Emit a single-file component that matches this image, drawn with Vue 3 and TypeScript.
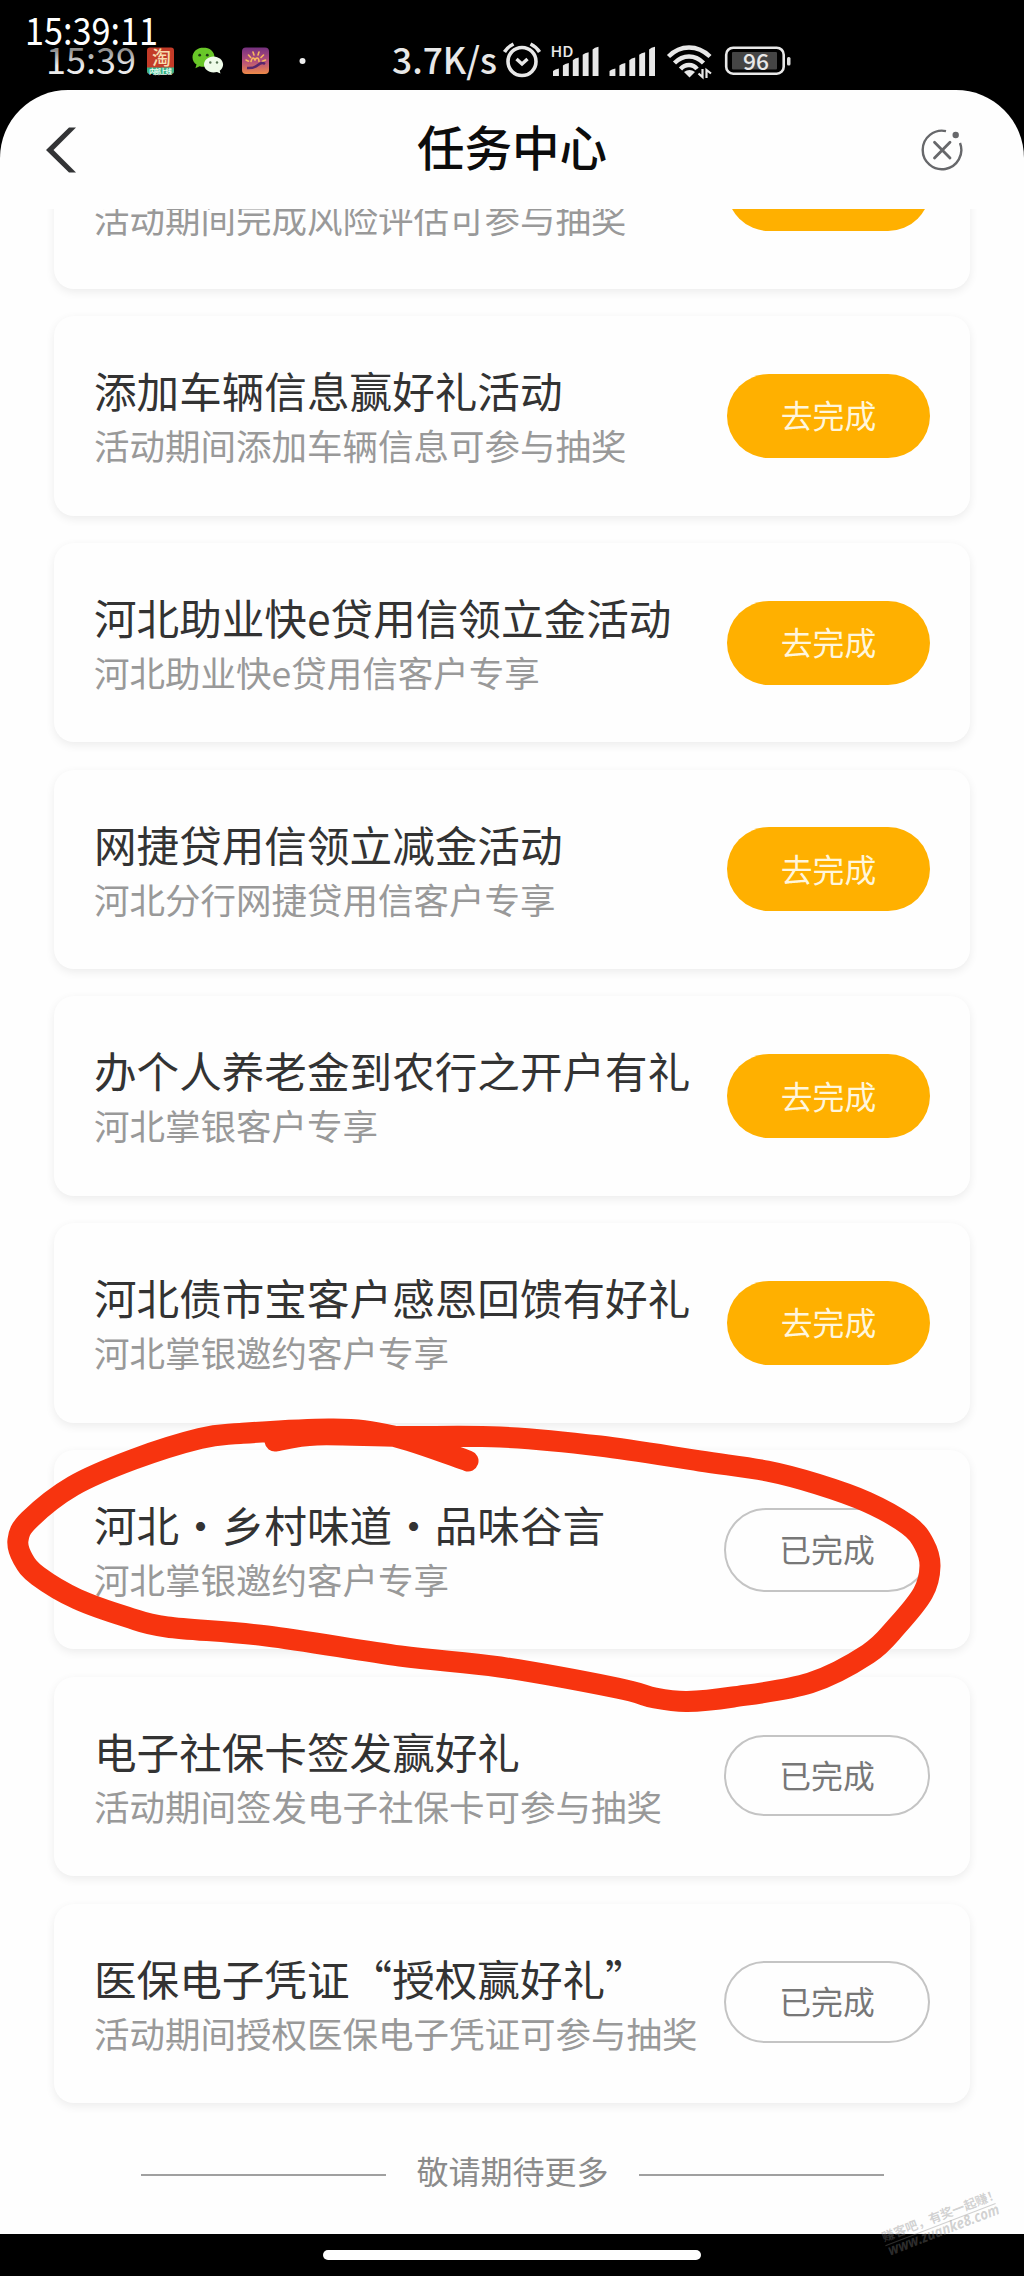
<script setup lang="ts">
interface Task {
  title?: string
  desc: string
  done?: boolean
  tall?: boolean
}

const tasks: Task[] = [
  { desc: '活动期间完成风险评估可参与抽奖' },
  { title: '添加车辆信息赢好礼活动', desc: '活动期间添加车辆信息可参与抽奖' },
  { title: '河北助业快e贷用信领立金活动', desc: '河北助业快e贷用信客户专享' },
  { title: '网捷贷用信领立减金活动', desc: '河北分行网捷贷用信客户专享' },
  { title: '办个人养老金到农行之开户有礼', desc: '河北掌银客户专享' },
  { title: '河北债市宝客户感恩回馈有好礼', desc: '河北掌银邀约客户专享' },
  { title: '河北・乡村味道・品味谷言', desc: '河北掌银邀约客户专享', done: true, tall: true },
  { title: '电子社保卡签发赢好礼', desc: '活动期间签发电子社保卡可参与抽奖', done: true },
  { title: '医保电子凭证“授权赢好礼”', desc: '活动期间授权医保电子凭证可参与抽奖', done: true },
]

type Point = [number, number]

// Hand-drawn marker stroke, clockwise from its first touch
const stroke: Point[] = [
  [275, 1441], [317, 1435], [400, 1436.5], [500, 1437], [600, 1446], [700, 1461], [767, 1471],
  [817, 1484], [867, 1502], [908, 1525], [924, 1544], [930, 1566], [923, 1593], [897, 1626],
  [868, 1654], [810, 1683], [733, 1697], [687, 1701.5], [655, 1698], [617, 1688], [500, 1667],
  [400, 1656], [267, 1636], [167, 1627], [127, 1617], [77, 1599], [38, 1576], [23, 1559],
  [18, 1540], [29, 1520], [73, 1486], [133, 1459.5], [200, 1438.5], [240, 1433.5], [333, 1429],
  [393, 1436], [468, 1461],
]

function smooth(p: Point[]): string {
  let d = `M${p[0][0]} ${p[0][1]}`
  for (let i = 0; i < p.length - 1; i++) {
    const a = p[Math.max(i - 1, 0)]
    const b = p[i]
    const c = p[i + 1]
    const e = p[Math.min(i + 2, p.length - 1)]
    d += `C${b[0] + (c[0] - a[0]) / 6} ${b[1] + (c[1] - a[1]) / 6} ${c[0] - (e[0] - b[0]) / 6} ${c[1] - (e[1] - b[1]) / 6} ${c[0]} ${c[1]}`
  }
  return d
}

const strokePath = smooth(stroke)
const bars = [0, 1, 2, 3, 4]
</script>

<template>
  <div class="phone">
    <div class="status">
      <svg class="status-left" viewBox="0 0 320 90" width="320" height="90">
        <defs>
          <linearGradient id="clock-fade" x1="0" y1="0" x2="0" y2="1">
            <stop offset=".35" stop-color="#909090" />
            <stop offset=".65" stop-color="#ececec" />
          </linearGradient>
          <linearGradient id="sunset-fade" x1="0" y1="0" x2="0" y2="1">
            <stop offset="0" stop-color="#75307f" />
            <stop offset=".55" stop-color="#b8527a" />
            <stop offset="1" stop-color="#ee8a48" />
          </linearGradient>
        </defs>
        <text x="46" y="74" font-size="36" fill="url(#clock-fade)" textLength="90" lengthAdjust="spacingAndGlyphs">15:39</text>
        <text x="25" y="45" font-size="38.500" fill="#fff" textLength="133" lengthAdjust="spacingAndGlyphs">15:39:11</text>
        <rect x="147" y="47.500" width="27" height="26.500" rx="3" fill="#c33b28" />
        <path d="M147 67.500h27V71a3 3 0 0 1-3 3h-21a3 3 0 0 1-3-3z" fill="#35b184" />
        <text x="152" y="65" font-size="19" fill="#f7dcae" font-weight="500">淘</text>
        <text x="149" y="73.500" font-size="6.500" fill="#e8fff4" font-weight="700" textLength="23">内部上线</text>
        <path d="M203.500 47.500c-6.100 0-11 4.300-11 9.700 0 3.100 1.600 5.600 4 7.400l-1.100 3.600 4.200-2c1.200.4 2.500.6 3.900.6 6.100 0 11-4.300 11-9.700s-4.900-9.600-11-9.600z" fill="#69c728" />
        <circle cx="199.700" cy="55.200" r="1.400" fill="#1d3a10" /><circle cx="207.300" cy="55.200" r="1.400" fill="#1d3a10" />
        <path d="M213.500 56.500c5.300 0 9.600 3.600 9.600 8.100 0 2.500-1.300 4.700-3.400 6.200l.8 2.700-3.500-1.500c-1.100.3-2.300.5-3.500.5-5.300 0-9.500-3.500-9.500-7.900s4.200-8.100 9.500-8.100z" fill="#eefbe9" />
        <circle cx="210.300" cy="62.500" r="1.200" fill="#557252" /><circle cx="217" cy="62.500" r="1.200" fill="#557252" />
        <rect x="242" y="47.500" width="27" height="26.500" rx="4" fill="url(#sunset-fade)" />
        <g fill="none" stroke="#f8b85e" stroke-width="1.600" stroke-linecap="round">
          <path d="M246 60l2.500 1.200M248.500 55l2.200 2.500M253 52l1 3M259 52l-1 3M263.500 55l-2.500 2.500M265.500 60l-3 1.200M251 61.500c1-4 3-5 4-1 1-4 4-3 4 1" />
        </g>
        <path d="M247 68q7 .5 11-3t7-1" fill="none" stroke="#57266d" stroke-width="2.400" />
        <circle cx="302.500" cy="61" r="3" fill="#eee" />
      </svg>
      <svg class="status-right" viewBox="385 0 410 90" width="410" height="90">
        <text x="392" y="74" font-size="36" fill="#e8e8e8" font-weight="500" textLength="105" lengthAdjust="spacingAndGlyphs">3.7K/s</text>
        <g fill="none" stroke="#e8e8e8">
          <circle cx="522" cy="61.500" r="14" stroke-width="3.600" />
          <path d="M516.500 59l5.500 5 5.500-5" stroke-width="3.400" />
          <path d="M504.500 52q3-5 9-8M539.500 52q-3-5-9-8" stroke-width="3.600" />
        </g>
        <text x="550.500" y="57" font-size="14.500" fill="#e8e8e8" font-weight="500" textLength="23" lengthAdjust="spacingAndGlyphs">HD</text>
        <g v-for="ox in [553, 609.500]" :key="ox" fill="#e8e8e8">
          <path v-for="b in bars" :key="b" :d="`M${ox + b * 9.9} 76v${-(5 + b * 5.4)}q2-2 5.900-2.600v${7.6 + b * 5.4}z`" />
        </g>
        <g fill="none" stroke="#e8e8e8" stroke-width="4.400">
          <path d="M668.500 56.500q9-9 20.500-9t21 9" />
          <path d="M674.500 63q6.500-6.500 14.500-6.500t14.500 6.500" />
          <path d="M680.500 69q3.500-4 8.500-4t8 4" />
        </g>
        <path d="M684 72q5.500-4 11 0l-5.500 5.500z" fill="#e8e8e8" />
        <path d="M702.500 69v8l-4-3.500M706.500 78v-8l4.500 3.500" fill="none" stroke="#e8e8e8" stroke-width="2.200" />
        <rect x="726.200" y="47.700" width="57.500" height="26" rx="7" fill="none" stroke="#e8e8e8" stroke-width="2.600" />
        <rect x="732" y="52" width="45" height="17.500" rx="1" fill="#454545" />
        <rect x="787" y="57" width="3.500" height="8.500" rx="1.500" fill="#ddd" />
        <text x="743" y="69.500" font-size="22.500" fill="#e8e8e8" font-weight="500" textLength="26" lengthAdjust="spacingAndGlyphs">96</text>
      </svg>
    </div>

    <div class="screen">
      <header class="header">
        <svg viewBox="0 0 32 48" width="32" height="48"><path d="M1 24 24 1.500h7L8.500 24 31 46.500h-7z" fill="#333436" /></svg>
        <h1>任务中心</h1>
        <svg viewBox="-21 -21 42 42" width="42" height="42" fill="none" stroke="#67686b">
          <path d="M4 -18.900A19.300 19.300 0 1 0 18 -7" stroke-width="2.400" />
          <path d="M-7.500 -7.800 8 8M8 -7.800 -7.500 8" stroke-width="2.800" stroke-linecap="round" />
          <circle cx="13.700" cy="-15" r="3.200" fill="#67686b" stroke="none" />
        </svg>
      </header>

      <main class="content">
        <section class="list">
          <article v-for="(t, i) in tasks" :key="i" class="card">
            <div class="copy">
              <h2>{{ t.title }}</h2>
              <p>{{ t.desc }}</p>
            </div>
            <button :class="{ done: t.done, tall: t.tall }"><template v-if="t.title">{{ t.done ? '已完成' : '去完成' }}</template></button>
          </article>
        </section>
        <footer class="more"><i></i><span>敬请期待更多</span><i></i></footer>
      </main>
    </div>

    <div class="nav"><span></span></div>

    <svg class="overlay" viewBox="0 0 1024 2276" width="1024" height="2276">
      <path :d="strokePath" fill="none" stroke="#f7340f" stroke-width="21" stroke-linecap="round" stroke-linejoin="round" />
      <g transform="translate(884 2242) rotate(-21)" fill="#808080" fill-opacity=".36" font-weight="700">
        <text x="0" y="0" font-size="12.500" textLength="125">赚客吧，有奖一起赚！</text>
        <rect x="0" y="3.500" width="118" height="1" />
        <text class="url" x="1" y="15" font-size="15" textLength="118" lengthAdjust="spacingAndGlyphs">www.zuanke8.com</text>
      </g>
    </svg>
  </div>
</template>

<style>
body {
  margin: 0;
  background: #000;
}
</style>

<style scoped>
.phone {
  position: relative;
  width: 1024px;
  height: 2276px;
  display: flex;
  flex-direction: column;
  overflow: hidden;
  background: #000;
  font-family: "Noto Sans CJK SC", sans-serif;
}
.status {
  display: flex;
  gap: 65px;
  height: 90px;
  flex: none;
}
.screen {
  display: flex;
  flex-direction: column;
  height: 2144px;
  flex: none;
  border-radius: 68px 68px 0 0;
  background: #fefefe;
  overflow: hidden;
}
.header {
  display: flex;
  flex: none;
  align-items: center;
  justify-content: space-between;
  box-sizing: border-box;
  height: 119px;
  padding: 0 61px 0 45px;
}
.header h1 {
  margin: -7px 0 0 26px;
  font-size: 47.5px;
  line-height: 60px;
  font-weight: 500;
  color: #0c0c0c;
}
.content {
  display: flex;
  flex: 1;
  flex-direction: column;
  justify-content: flex-end;
  min-height: 0;
  overflow: hidden;
}
.list {
  display: flex;
  flex: none;
  flex-direction: column;
  gap: 27.4px;
  padding: 0 54px;
}
.card {
  display: flex;
  justify-content: space-between;
  box-sizing: border-box;
  height: 199.4px;
  padding: 45px 40px 0 40px;
  border-radius: 20px;
  background: #fefefe;
  box-shadow: 0 3px 10px rgba(0, 0, 0, .075);
  white-space: nowrap;
}
.copy {
  width: 0;
}
h2,
p {
  margin: 0;
  font-weight: 400;
}
h2 {
  height: 58px;
  font-size: 42.6px;
  line-height: 58px;
  color: #333;
}
p {
  font-size: 35.5px;
  line-height: 52px;
  color: #999;
}
button {
  flex: none;
  box-sizing: border-box;
  width: 203px;
  height: 84px;
  margin: 12.7px 0 0;
  padding: 0 0 3px;
  border: 0;
  border-radius: 42px;
  background: #ffb000;
  color: #fff6dc;
  font: 400 31.8px/80px "Noto Sans CJK SC", sans-serif;
}
button.done {
  width: 206px;
  height: 81.5px;
  border: 2px solid #c4c4c4;
  background: transparent;
  color: #777;
  line-height: 75px;
}
button.tall {
  height: 84px;
}
.more {
  display: flex;
  flex: none;
  align-items: center;
  justify-content: space-between;
  height: 131px;
  padding: 0 140px 0 141px;
  color: #8b8b8b;
  font-size: 32px;
}
.more i {
  width: 245px;
  height: 2.5px;
  margin-top: 13px;
  background: #a0a0a0;
}
.more span {
  margin-top: 3px;
}
.nav {
  display: flex;
  flex: 1;
  justify-content: center;
  align-items: flex-start;
  background: #000;
}
.nav span {
  width: 378px;
  height: 10px;
  margin-top: 16px;
  border-radius: 5px;
  background: #fff;
}
.overlay {
  position: absolute;
  inset: 0;
  pointer-events: none;
}
.url {
  font-family: "Open Sans", "Liberation Sans", sans-serif;
  font-style: italic;
}
</style>
